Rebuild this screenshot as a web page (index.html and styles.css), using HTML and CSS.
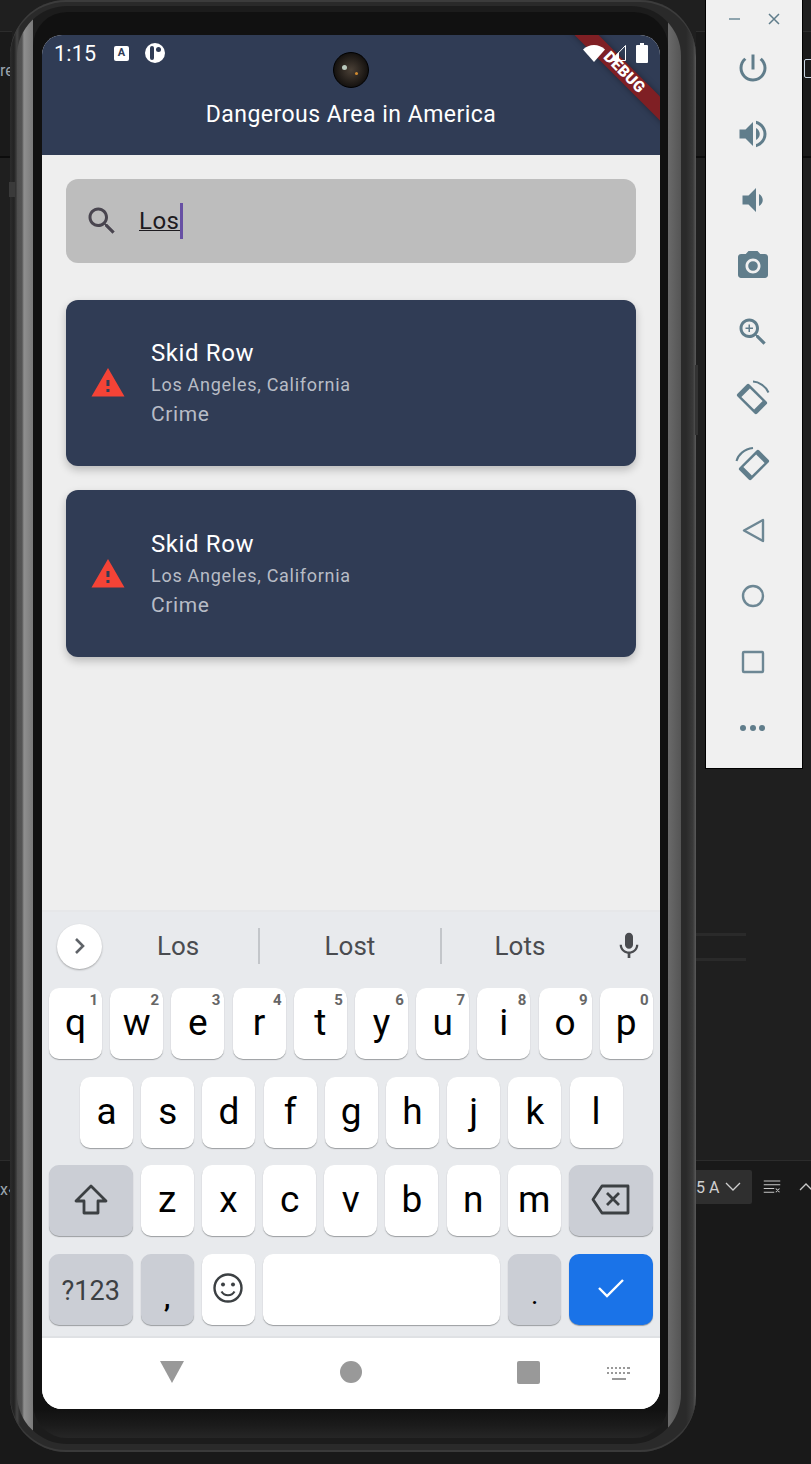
FILE: index.html
```html
<!DOCTYPE html>
<html lang="en">
<head>
    <meta charset="UTF-8">
    <title>Dangerous Area in America</title>
    <link rel="stylesheet" href="styles.css">
</head>
<body>
    <div class="ide-bits">
        <span class="ide-lower"></span>
        <span class="ide-band band-left"></span>
        <span class="ide-band band-right"></span>
        <span class="ide-line line-1"></span>
        <span class="ide-line line-2"></span>
        <span class="ide-left-top">re</span>
        <span class="ide-left-bot">x‹</span>
        <span class="ide-box"></span>
        <div class="ide-tool">
            <span class="ide-combo">5 A
                <svg width="16" height="10" viewBox="0 0 16 10"><path d="M1 1l7 7 7-7" fill="none" stroke="#cfcfcf" stroke-width="1.3"/></svg>
            </span>
            <svg width="24" height="18" viewBox="0 0 24 18"><path d="M1 1h22M1 6h22M1 11h14M1 16h14M17 11l5 5m0-5l-5 5" fill="none" stroke="#c8c8c8" stroke-width="1.4"/></svg>
            <svg class="ide-up" width="12" height="10" viewBox="0 0 12 10"><path d="M1 8l6-6 6 6" fill="none" stroke="#c8c8c8" stroke-width="1.3"/></svg>
        </div>
    </div>

    <div id="phone">
        <span class="side-btn btn-left"></span>
        <span class="side-btn btn-right"></span>
        <div id="rim">
            <div id="bezel">
                <div id="screen">
                    <div class="camera"><i class="glint g1"></i><i class="glint g2"></i></div>
                    <div class="debug-ribbon">DEBUG</div>

                    <div class="app-bar">
                        <div class="status-bar">
                            <span class="clock">1:15</span>
                            <span class="note-a">A</span>
                            <span class="note-round"><i></i><b></b></span>
                            <span class="status-right">
                                <svg width="22" height="18" viewBox="0 0 22 18"><path d="M0 5.500C3 2.500 7 1 11 1s8 1.500 11 4.500L11 18z" fill="#fff"/></svg>
                                <svg class="signal" width="16" height="18" viewBox="0 0 16 18"><path d="M15.500 1.500v15H1z" fill="none" stroke="#fff" stroke-width="1"/><path d="M9 8v9H1z" fill="#fff"/></svg>
                                <svg width="12" height="20" viewBox="0 0 12 20"><path d="M4 0h4v2h3a1 1 0 0 1 1 1v16a1 1 0 0 1-1 1H1a1 1 0 0 1-1-1V3a1 1 0 0 1 1-1h3z" fill="#fff"/></svg>
                            </span>
                        </div>
                        <div class="app-title">Dangerous Area in America</div>
                    </div>

                    <div class="content">
                        <div class="search-box">
                            <svg class="search-ic" width="36" height="36" viewBox="0 0 24 24"><path d="M15.500 14h-.79l-.28-.27C15.410 12.590 16 11.110 16 9.500 16 5.910 13.090 3 9.500 3S3 5.910 3 9.500 5.910 16 9.500 16c1.610 0 3.090-.59 4.230-1.570l.27.28v.79l5 4.990L20.490 19l-4.990-5zm-6 0C7.010 14 5 11.990 5 9.500S7.010 5 9.500 5 14 7.010 14 9.500 11.990 14 9.500 14z" fill="#49454f"/></svg>
                            <span class="search-text">Los</span><span class="caret"></span>
                        </div>

                        <div class="place-card">
                            <svg class="warn-ic" width="36" height="36" viewBox="0 0 24 24"><path d="M1 21h22L12 2 1 21zm12-3h-2v-2h2v2zm0-4h-2v-4h2v4z" fill="#f44336"/></svg>
                            <div class="place-info">
                                <div class="place-name">Skid Row</div>
                                <div class="place-city">Los Angeles, California</div>
                                <div class="place-type">Crime</div>
                            </div>
                        </div>
                        <div class="place-card">
                            <svg class="warn-ic" width="36" height="36" viewBox="0 0 24 24"><path d="M1 21h22L12 2 1 21zm12-3h-2v-2h2v2zm0-4h-2v-4h2v4z" fill="#f44336"/></svg>
                            <div class="place-info">
                                <div class="place-name">Skid Row</div>
                                <div class="place-city">Los Angeles, California</div>
                                <div class="place-type">Crime</div>
                            </div>
                        </div>
                    </div>

                    <div class="keyboard">
                        <div class="suggest-row">
                            <span class="expand-btn"><svg width="16" height="18" viewBox="0 0 16 18"><path d="M4 2l7 7-7 7" fill="none" stroke="#5f6368" stroke-width="2.600"/></svg></span>
                            <span class="word w1">Los</span>
                            <span class="word-div"></span>
                            <span class="word w2">Lost</span>
                            <span class="word-div"></span>
                            <span class="word w3">Lots</span>
                            <svg class="mic-ic" width="32" height="32" viewBox="0 0 24 24"><path d="M12 14c1.660 0 3-1.340 3-3V5c0-1.660-1.340-3-3-3S9 3.340 9 5v6c0 1.660 1.340 3 3 3zm5.300-3c0 3-2.540 5.100-5.300 5.100S6.700 14 6.700 11H5c0 3.410 2.720 6.230 6 6.720V21h2v-3.280c3.280-.48 6-3.300 6-6.720h-1.700z" fill="#4a4c50"/></svg>
                        </div>

                        <div class="key-row">
                            <span class="key">q<sup>1</sup></span><span class="key">w<sup>2</sup></span><span class="key">e<sup>3</sup></span><span class="key">r<sup>4</sup></span><span class="key">t<sup>5</sup></span><span class="key">y<sup>6</sup></span><span class="key">u<sup>7</sup></span><span class="key">i<sup>8</sup></span><span class="key">o<sup>9</sup></span><span class="key">p<sup>0</sup></span>
                        </div>
                        <div class="key-row row-a">
                            <span class="key">a</span><span class="key">s</span><span class="key">d</span><span class="key">f</span><span class="key">g</span><span class="key">h</span><span class="key">j</span><span class="key">k</span><span class="key">l</span>
                        </div>
                        <div class="key-row">
                            <span class="key wide dark">
                                <svg width="36" height="34" viewBox="0 0 36 34"><path d="M18 3L3 18h8v12h14V18h8z" fill="none" stroke="#3c4043" stroke-width="2.800" stroke-linejoin="round"/></svg>
                            </span>
                            <span class="key">z</span><span class="key">x</span><span class="key">c</span><span class="key">v</span><span class="key">b</span><span class="key">n</span><span class="key">m</span>
                            <span class="key wide dark">
                                <svg width="40" height="32" viewBox="0 0 40 32"><path d="M11 2h26v27H11L2 15.500z" fill="none" stroke="#3c4043" stroke-width="2.800" stroke-linejoin="round"/><path d="M16 9l12 12m0-12L16 21" fill="none" stroke="#3c4043" stroke-width="2.800"/></svg>
                            </span>
                        </div>
                        <div class="key-row">
                            <span class="key wide dark sym">?123</span>
                            <span class="key dark low comma">,</span>
                            <span class="key">
                                <svg width="32" height="32" viewBox="0 0 32 32"><circle cx="16" cy="16" r="13.500" fill="none" stroke="#3c4043" stroke-width="2.400"/><circle cx="11" cy="12.500" r="2" fill="#3c4043"/><circle cx="21" cy="12.500" r="2" fill="#3c4043"/><path d="M9.500 19.500c3 5 10 5 13 0" fill="none" stroke="#3c4043" stroke-width="2.200"/></svg>
                            </span>
                            <span class="key space"></span>
                            <span class="key dark low">.</span>
                            <span class="key wide blue">
                                <svg width="28" height="22" viewBox="0 0 28 22"><path d="M2 11l8 8L26 3" fill="none" stroke="#fff" stroke-width="2.400"/></svg>
                            </span>
                        </div>
                    </div>

                    <div class="nav-bar">
                        <span class="nav-back"></span>
                        <span class="nav-home"></span>
                        <span class="nav-square"></span>
                        <svg class="nav-kbd" width="24" height="14" viewBox="0 0 24 14"><path d="M0 1h2v2H0zm4 0h2v2H4zm4 0h2v2H8zm4 0h2v2h-2zm4 0h2v2h-2zm4 0h3v2h-3zM0 6h2v2H0zm4 0h2v2H4zm4 0h2v2H8zm4 0h2v2h-2zm4 0h2v2h-2zm4 0h3v2h-3zM5 12h14v2H5z" fill="#999"/></svg>
                    </div>
                </div>
            </div>
        </div>
    </div>

    <div id="emu-panel">
        <div class="emu-head">
            <span class="emu-min"></span>
            <svg width="12" height="12" viewBox="0 0 12 12"><path d="M1 1l10 10m0-10L1 11" stroke="#607d8b" stroke-width="1.500"/></svg>
        </div>
        <div class="emu-btn"><svg width="36" height="36" viewBox="0 0 24 24"><path d="M13 3h-2v10h2V3zm4.830 2.170l-1.420 1.420C17.990 7.860 19 9.810 19 12c0 3.870-3.130 7-7 7s-7-3.130-7-7c0-2.190 1.010-4.140 2.580-5.420L6.170 5.170C4.230 6.820 3 9.260 3 12c0 4.970 4.030 9 9 9s9-4.030 9-9c0-2.740-1.230-5.180-3.170-6.830z"/></svg></div>
        <div class="emu-btn"><svg width="36" height="36" viewBox="0 0 24 24"><path d="M3 9v6h4l5 5V4L7 9H3zm13.500 3c0-1.770-1.020-3.290-2.500-4.030v8.050c1.480-.73 2.500-2.250 2.500-4.020zM14 3.230v2.060c2.890.86 5 3.540 5 6.710s-2.110 5.850-5 6.710v2.060c4.010-.91 7-4.490 7-8.770s-2.990-7.860-7-8.770z"/></svg></div>
        <div class="emu-btn"><svg width="36" height="36" viewBox="0 0 24 24"><path d="M18.500 12c0-1.770-1.020-3.290-2.500-4.030v8.050c1.480-.72 2.500-2.240 2.500-4.020zM5 9v6h4l5 5V4L9 9H5z"/></svg></div>
        <div class="emu-btn"><svg width="36" height="36" viewBox="0 0 24 24"><path d="M12 15.200a3.200 3.200 0 1 0 0-6.400 3.200 3.200 0 0 0 0 6.400zM9 2L7.170 4H4c-1.100 0-2 .9-2 2v12c0 1.100.9 2 2 2h16c1.100 0 2-.9 2-2V6c0-1.100-.9-2-2-2h-3.170L15 2H9zm3 15c-2.760 0-5-2.240-5-5s2.240-5 5-5 5 2.240 5 5-2.240 5-5 5z"/></svg></div>
        <div class="emu-btn"><svg width="36" height="36" viewBox="0 0 24 24"><path d="M15.500 14h-.79l-.28-.27C15.410 12.590 16 11.110 16 9.500 16 5.910 13.090 3 9.500 3S3 5.910 3 9.500 5.910 16 9.500 16c1.610 0 3.090-.59 4.230-1.570l.27.28v.79l5 4.990L20.490 19l-4.990-5zm-6 0C7.010 14 5 11.990 5 9.500S7.010 5 9.500 5 14 7.010 14 9.500 11.990 14 9.500 14z"/><path d="M12 10h-2v2H9v-2H7V9h2V7h1v2h2v1z"/></svg></div>
        <div class="emu-btn"><svg width="36" height="36" viewBox="0 0 36 36"><g transform="rotate(-45 17 19)"><rect x="8.500" y="5" width="17" height="28" rx="2"/><rect x="11" y="10" width="12" height="18" fill="#f0f0f0"/></g><path d="M18 1.500c6 .2 13 5 15.500 11" fill="none" stroke="#607d8b" stroke-width="2"/></svg></div>
        <div class="emu-btn"><svg width="36" height="36" viewBox="0 0 36 36"><g transform="rotate(45 19 19)"><rect x="10.500" y="5" width="17" height="28" rx="2"/><rect x="13" y="10" width="12" height="18" fill="#f0f0f0"/></g><path d="M1.500 15C3 9 9 3 18 2" fill="none" stroke="#607d8b" stroke-width="2"/></svg></div>
        <div class="emu-btn"><svg width="36" height="36" viewBox="0 0 36 36"><path d="M28 8v21L9 18.500z" fill="none" stroke="#6d8794" stroke-width="2.400" stroke-linejoin="round"/></svg></div>
        <div class="emu-btn"><svg width="36" height="36" viewBox="0 0 36 36"><circle cx="18" cy="18" r="10" fill="none" stroke="#6d8794" stroke-width="2.400"/></svg></div>
        <div class="emu-btn"><svg width="36" height="36" viewBox="0 0 36 36"><rect x="8" y="8" width="20" height="20" rx="1" fill="none" stroke="#6d8794" stroke-width="2.400"/></svg></div>
        <div class="emu-btn"><svg width="36" height="36" viewBox="0 0 36 36"><circle cx="8" cy="18" r="3"/><circle cx="18" cy="18" r="3"/><circle cx="27" cy="18" r="3"/></svg></div>
    </div>
</body>
</html>
```

FILE: styles.css
```css
* {box-sizing: border-box;}
html, body {margin: 0; height: 100%;}
body {
    width: 811px;
    height: 1464px;
    overflow: hidden;
    display: flex;
    align-items: flex-start;
    background-color: #1f1f1f;
    font-family: Roboto, sans-serif;
    position: relative;
}

/* IDE peeking out behind the emulator */
.ide-bits {position: absolute; inset: 0; color: #9aa4ad; font-size: 16px;}
.ide-lower {position: absolute; left: 0; right: 0; top: 1160px; bottom: 0; background-color: #191919; border-top: 1px solid #2c2c2c;}
.ide-band {position: absolute; top: 31px; height: 127px; background-color: #1a1a1a; border-top: 1px solid #2c2c2c; border-bottom: 2px solid #0c0c0c;}
.band-left {left: 0; width: 12px;}
.band-right {left: 696px; width: 115px;}
.ide-line {position: absolute; left: 696px; width: 50px; height: 3px; background-color: #2a2a2a;}
.line-1 {top: 933px;}
.line-2 {top: 958px;}
.ide-left-top {position: absolute; left: 0; top: 61px;}
.ide-left-bot {position: absolute; left: 0; top: 1180px;}
.ide-box {position: absolute; left: 804px; top: 59px; width: 12px; height: 19px; border: 1.500px solid #c8d4e0; border-radius: 2px;}
.ide-tool {
    position: absolute;
    left: 690px;
    top: 1170px;
    width: 121px;
    height: 34px;
    display: flex;
    align-items: center;
    gap: 11px;
    color: #cfcfcf;
}
.ide-combo {
    flex: none;
    display: flex;
    align-items: center;
    gap: 6px;
    width: 62px;
    height: 34px;
    padding-left: 6px;
    background-color: #2f2f2f;
    border-radius: 2px;
}
.ide-up {flex: none; margin-left: 7px;}

/* phone: outer ring > bright rim > black bezel > screen */
#phone {
    flex: none;
    width: 686px;
    height: 1452px;
    margin-left: 10px;
    padding: 6px 15px 8px 7px;
    border-radius: 56px;
    background: linear-gradient(to right, #2c2c2c 0, #222 4px, #444 7px, #2a2a2a 10px, #2a2a2a 676px, #3a3a3a 683px, #5a5a5a 686px);
    box-shadow: inset 0 2px 0 #3c3c3c, inset 0 -2px 0 #3a3a3a;
    position: relative;
    z-index: 1;
}
.side-btn {position: absolute; background-color: #3a3a3a;}
.btn-left {left: -1px; top: 182px; width: 6px; height: 15px;}
.btn-right {right: -2px; top: 365px; width: 3px; height: 70px; background-color: #333;}
#rim {
    width: 664px;
    height: 1438px;
    padding: 6px 13px 6px 16px;
    border-radius: 50px;
    background: linear-gradient(to right, #4e4e4e 0, #555 5px, #8f8f8f 7px, #7a7a7a 16px, #1c1c1c 16.100px, #1c1c1c 651px, #6a6a6a 651.100px, #555 664px);
}
#bezel {
    width: 635px;
    height: 1426px;
    padding: 23px 8px 29px 9px;
    border-radius: 34px;
    background: linear-gradient(to bottom, #111 0, #111 1397px, #1a1a1a 1412px, #262626 1426px);
}
#screen {
    position: relative;
    width: 618px;
    height: 1374px;
    overflow: hidden;
    border-radius: 20px;
    background-color: #eee;
    display: flex;
    flex-direction: column;
}
.camera {
    position: absolute;
    left: 291px;
    top: 17px;
    width: 36px;
    height: 36px;
    border-radius: 50%;
    background: radial-gradient(circle at 50% 50%, #4a4036, #14110f 72%);
    border: 1px solid #000;
}
.glint {position: absolute; border-radius: 50%;}
.g1 {left: 8px; top: 12px; width: 5px; height: 5px; background-color: #b9c8bc;}
.g2 {left: 21px; top: 19px; width: 3px; height: 3px; background-color: #d08a30;}
.debug-ribbon {
    position: absolute;
    left: 510px;
    top: 27px;
    width: 140px;
    height: 17px;
    padding-left: 6px;
    transform: rotate(45deg);
    background-color: #7f1f24;
    color: #fff;
    font-size: 15.500px;
    font-weight: 900;
    letter-spacing: .3px;
    line-height: 17px;
    text-align: center;
    box-shadow: 0 0 6px rgba(0,0,0,.35);
    z-index: 3;
}

.app-bar {
    flex: none;
    height: 120px;
    background-color: #303c55;
    color: #fff;
}
.status-bar {
    height: 36px;
    display: flex;
    align-items: center;
    padding: 0 12px;
}
.clock {font-size: 21.500px; width: 60px; letter-spacing: .2px;}
.note-a {
    width: 15px;
    height: 15px;
    background-color: #fff;
    border-radius: 2px;
    color: #303c55;
    font-size: 11px;
    font-weight: 700;
    text-align: center;
    line-height: 14px;
}
.note-round {
    position: relative;
    width: 20px;
    height: 20px;
    margin-left: 16px;
    background-color: #fff;
    border-radius: 50%;
}
.note-round i {position: absolute; left: 5px; top: 3px; width: 4px; height: 14px; background-color: #303c55; border-radius: 2px;}
.note-round b {position: absolute; left: 11px; top: 4px; width: 5px; height: 5px; background-color: #303c55; border-radius: 50%;}
.status-right {
    margin-left: auto;
    display: flex;
    align-items: center;
    gap: 5px;
    position: relative;
    z-index: 4;
}
.signal {margin-right: 5px;}
.app-title {
    margin-top: 29px;
    text-align: center;
    font-size: 23px;
    letter-spacing: .48px;
    line-height: 30px;
}

.content {
    flex: 1;
    min-height: 0;
    padding: 24px 24px 0;
    display: flex;
    flex-direction: column;
    gap: 24px;
}
.search-box {
    flex: none;
    height: 84px;
    margin-bottom: 13px;
    background-color: #bdbdbd;
    border-radius: 12px;
    display: flex;
    align-items: center;
    padding-left: 18px;
}
.search-ic {margin-right: 19px;}
.search-text {
    font-size: 24px;
    letter-spacing: .5px;
    color: #1d1b20;
    border-bottom: 1.500px solid #1d1b20;
    line-height: 18px;
    margin-top: 1.500px;
}
.caret {width: 3px; height: 36px; background-color: #6750a4;}

.place-card {
    flex: none;
    height: 166.400px;
    background-color: #303c55;
    border-radius: 12px;
    box-shadow: 0 4px 8px rgba(0,0,0,.22);
    display: flex;
    align-items: center;
    padding-left: 24px;
}
.warn-ic {flex: none;}
.place-info {margin-left: 25px; padding-bottom: 2px;}
.place-name {color: #fff; font-size: 24px; letter-spacing: .6px; line-height: 30px;}
.place-city {color: #b8bcc6; font-size: 18px; letter-spacing: .72px; line-height: 34px;}
.place-type {color: #b8bcc6; font-size: 21px; letter-spacing: .6px; line-height: 24px;}

.keyboard {
    flex: none;
    height: 428px;
    padding: 0 7px;
    background-color: #e8eaed;
    border-top: 2px solid #e6e7e9;
    border-bottom: 2px solid #dfe1e4;
    display: flex;
    flex-direction: column;
}
.suggest-row {
    position: relative;
    flex: none;
    height: 76px;
    padding-bottom: 8px;
    display: flex;
    align-items: center;
    font-size: 26px;
    color: #4a4c50;
}
.expand-btn {
    flex: none;
    width: 45px;
    height: 45px;
    margin-left: 8px;
    background-color: #fff;
    border-radius: 50%;
    box-shadow: 0 1px 2px rgba(0,0,0,.3);
    display: flex;
    align-items: center;
    justify-content: center;
}
.word {flex: none; text-align: center;}
.w1 {width: 152px; margin-right: 4px;}
.w2 {width: 180px;}
.w3 {width: 156px;}
.word-div {width: 2px; height: 36px; background-color: #c3c6ca; flex: none;}
.mic-ic {position: absolute; left: 564px; top: 18px;}
.key-row {
    flex: none;
    display: flex;
    gap: 8.200px;
    height: 71px;
    margin-bottom: 17.600px;
}
.row-a {padding-left: 31px;}
.key {
    position: relative;
    flex: none;
    width: 53px;
    height: 71px;
    background-color: #fff;
    border-radius: 10px;
    box-shadow: 0 1px 1px rgba(60,64,67,.45);
    display: flex;
    align-items: center;
    justify-content: center;
    color: #000;
    font-size: 37px;
    padding-bottom: 2px;
}
.key sup {
    position: absolute;
    top: 3px;
    right: 4px;
    font-size: 15px;
    font-weight: 700;
    line-height: 18px;
    color: #666;
}
.wide {width: 83.500px;}
.dark {background-color: #cbced5;}
.blue {background-color: #1a73e8;}
.sym {font-size: 27px; color: #3c4043; padding: 4px 0 0;}
.low {align-items: flex-end; padding-bottom: 16px; font-size: 28px; line-height: 28px;}
.comma {padding-bottom: 13px; font-weight: 700; font-size: 26px;}
.space {width: 237px;}

.nav-bar {
    position: relative;
    flex: none;
    height: 71px;
    background-color: #fff;
}
.nav-back {
    position: absolute;
    left: 118px;
    top: 23px;
    width: 0;
    height: 0;
    border-left: 12.500px solid transparent;
    border-right: 12.500px solid transparent;
    border-top: 22px solid #999;
}
.nav-home {position: absolute; left: 298px; top: 23px; width: 22px; height: 22px; border-radius: 50%; background-color: #999;}
.nav-square {position: absolute; left: 475px; top: 23px; width: 23px; height: 23px; border-radius: 2px; background-color: #999;}
.nav-kbd {position: absolute; left: 565px; top: 28px;}

/* emulator side toolbar */
#emu-panel {
    flex: none;
    width: 98px;
    height: 769px;
    margin-left: 9px;
    background-color: #f0f0f0;
    border: 1px solid #000;
    border-top: 0;
    position: relative;
    z-index: 1;
}
.emu-head {
    height: 35px;
    padding: 13px 22px 0 23px;
    display: flex;
    justify-content: space-between;
    align-items: flex-start;
}
.emu-min {width: 11px; height: 2px; margin-top: 5px; background-color: #8ea4ae;}
.emu-btn {
    height: 66px;
    padding-right: 2px;
    display: flex;
    align-items: center;
    justify-content: center;
}
.emu-btn svg {fill: #607d8b;}
```
